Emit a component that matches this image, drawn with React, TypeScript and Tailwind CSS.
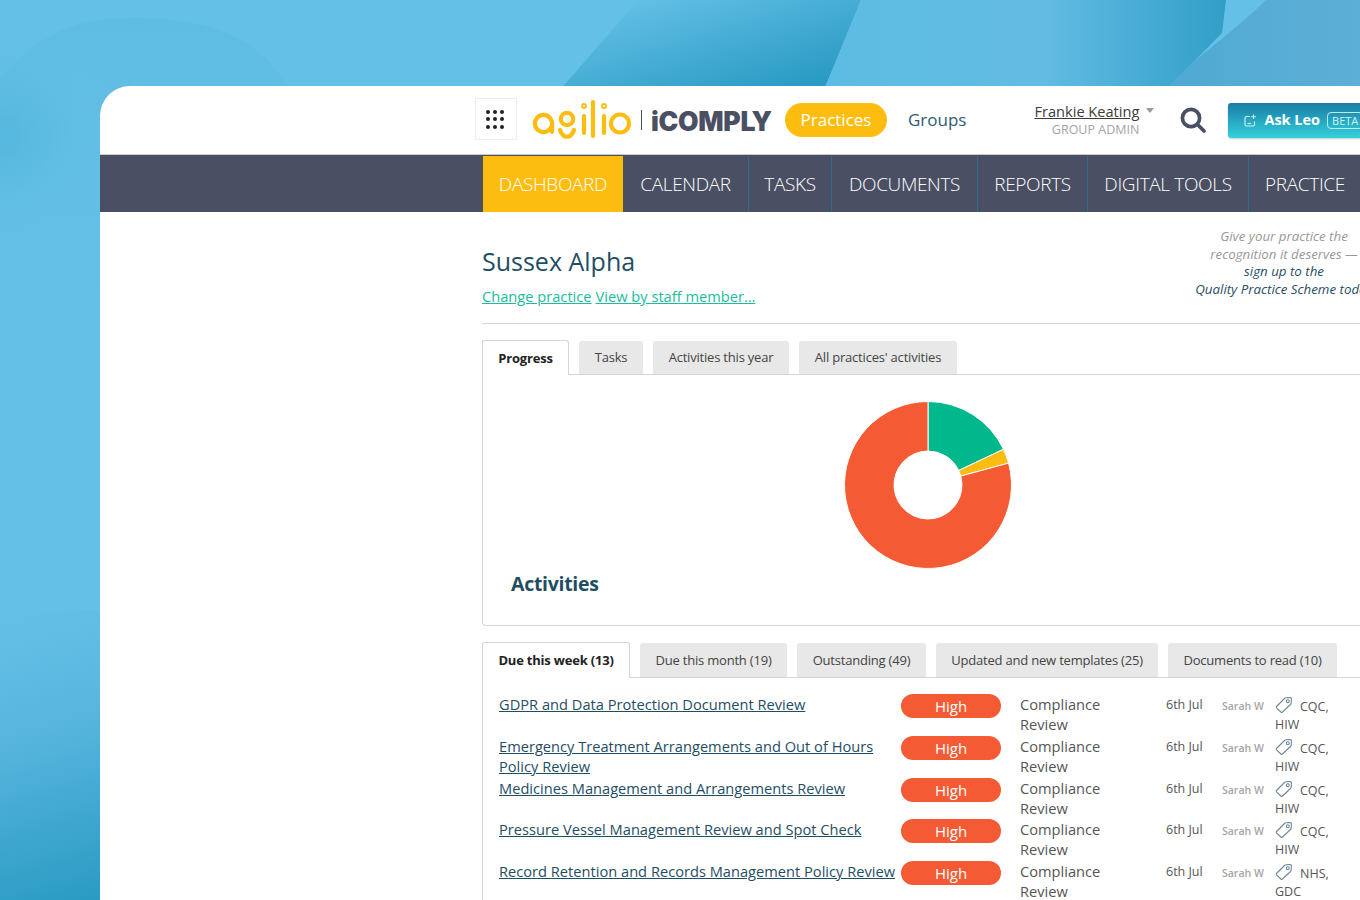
import React from 'react';

const tasks = [
  { title: 'GDPR and Data Protection Document Review', tags: ['CQC,', 'HIW'] },
  { title: 'Emergency Treatment Arrangements and Out of Hours Policy Review', tags: ['CQC,', 'HIW'] },
  { title: 'Medicines Management and Arrangements Review', tags: ['CQC,', 'HIW'] },
  { title: 'Pressure Vessel Management Review and Spot Check', tags: ['CQC,', 'HIW'] },
  { title: 'Record Retention and Records Management Policy Review', tags: ['NHS,', 'GDC'] },
];

const navItems = [
  { label: 'CALENDAR', w: 'w-[125px]' },
  { label: 'TASKS', w: 'w-[83px]' },
  { label: 'DOCUMENTS', w: 'w-[146px]' },
  { label: 'REPORTS', w: 'w-[110px]' },
  { label: 'DIGITAL TOOLS', w: 'w-[161px]' },
  { label: 'PRACTICE', w: 'w-[113px]' },
];

const polar = (r: number, deg: number) => {
  const a = ((deg - 90) * Math.PI) / 180;
  return `${84 + r * Math.cos(a)} ${84 + r * Math.sin(a)}`;
};

const slice = (from: number, to: number) => {
  const large = to - from > 180 ? 1 : 0;
  return `M${polar(83.5, from)} A83.5 83.5 0 ${large} 1 ${polar(83.5, to)} L${polar(34, to)} A34 34 0 ${large} 0 ${polar(34, from)} Z`;
};

const Background = () => (
  <svg className="absolute inset-0" width="1360" height="900" viewBox="0 0 1360 900">
    <defs>
      <linearGradient id="band1" x1="0.25" y1="0" x2="1" y2="0.75">
        <stop offset="0" stopColor="#63bfe6" />
        <stop offset="1" stopColor="#2a9bc3" />
      </linearGradient>
      <linearGradient id="band2" x1="0" y1="0" x2="1" y2="0">
        <stop offset="0" stopColor="#5dbce3" />
        <stop offset="0.55" stopColor="#62bbe3" />
        <stop offset="1" stopColor="#319fc8" />
      </linearGradient>
      <linearGradient id="band3" x1="0" y1="0" x2="1" y2="0">
        <stop offset="0" stopColor="#4fa9d2" />
        <stop offset="1" stopColor="#5dafd7" />
      </linearGradient>
      <linearGradient id="hill" x1="0" y1="0" x2="0" y2="1">
        <stop offset="0" stopColor="#5fbce3" />
        <stop offset="1" stopColor="#65c0e7" />
      </linearGradient>
      <radialGradient id="spot" gradientUnits="userSpaceOnUse" cx="0" cy="135" r="120">
        <stop offset="0" stopColor="#54b7dd" />
        <stop offset="1" stopColor="#65c0e7" stopOpacity="0" />
      </radialGradient>
      <linearGradient id="corner" gradientUnits="userSpaceOnUse" x1="10" y1="610" x2="95" y2="900">
        <stop offset="0" stopColor="#65c0e7" />
        <stop offset="0.4" stopColor="#58b6de" />
        <stop offset="1" stopColor="#2a9bc3" />
      </linearGradient>
    </defs>
    <rect width="1360" height="900" fill="#65c0e7" />
    <path d="M0 78 C40 30 85 18 130 18 C200 18 255 30 290 90 L290 300 L0 300 Z" fill="url(#hill)" />
    <rect width="200" height="300" fill="url(#spot)" />
    <rect y="610" width="100" height="290" fill="url(#corner)" />
    <path d="M638 0 L861 0 L824 90 L560 90 Z" fill="url(#band1)" />
    <path d="M861 0 L1226 0 L1222 33 L1166 90 L824 90 Z" fill="url(#band2)" />
    <path d="M1266 0 L1360 0 L1360 90 L1166 90 C1190 60 1225 40 1266 0 Z" fill="url(#band3)" />
  </svg>
);

const AgilioLogo = () => (
  <svg width="102" height="42" viewBox="0 0 102 42" fill="none" stroke="#fdbd10" strokeWidth="4.2" strokeLinecap="round" role="img" aria-label="agilio">
    <circle cx="11.5" cy="24.5" r="8.6" />
    <line x1="20.1" y1="24.5" x2="20.1" y2="33" />
    <circle cx="35" cy="20" r="6.2" />
    <path d="M28 31 C31 40 39 40 42 31" />
    <line x1="52" y1="17" x2="52" y2="34" />
    <circle cx="52" cy="7" r="0.9" strokeWidth="4" />
    <line x1="61" y1="3" x2="61" y2="37" />
    <line x1="72" y1="17" x2="72" y2="34" />
    <circle cx="72" cy="7" r="0.9" strokeWidth="4" />
    <circle cx="88" cy="24.5" r="9" />
  </svg>
);

const TabBar = ({ tabs, active, className }: { tabs: { label: string; w: string }[]; active: string; className: string }) => (
  <div className={`flex gap-[10px] border-b border-[#d5d5d5] ${className}`}>
    {tabs.map(t => (
      <div
        key={t.label}
        className={
          t.label === active
            ? `${t.w} -mb-px flex items-center justify-center rounded-t-[3px] border border-b-0 border-[#d5d5d5] bg-white pt-px text-[13px] font-bold tracking-[-0.2px] text-[#222]`
            : `${t.w} mt-px flex items-center justify-center rounded-t-[3px] bg-[#e8e8e8] pt-px text-[13px] tracking-[-0.2px] text-[#444]`
        }
      >
        {t.label}
      </div>
    ))}
  </div>
);

const TagIcon = () => (
  <svg width="18" height="18" viewBox="0 0 18 18" fill="none" stroke="#6f8796" strokeWidth="1.1" className="mb-[2px] shrink-0">
    <path d="M1.5 10.5 L9.5 2.5 Q10.2 1.8 11 1.8 L15.2 1.6 Q16.4 1.6 16.4 2.8 L16.2 7 Q16.2 7.8 15.5 8.5 L7.5 16 Q6.7 16.7 5.9 16 L1.5 11.8 Q0.9 11.1 1.5 10.5 Z" />
    <circle cx="12.8" cy="5.2" r="1.4" />
  </svg>
);

export default function App() {
  return (
    <div className="relative h-screen overflow-hidden font-['Open_Sans',sans-serif]">
      <Background />
      <div className="relative ml-[100px] mt-[86px] h-[814px] w-[1400px] rounded-tl-[30px] bg-white">
        {/* top bar */}
        <div className="flex h-[68px] items-center pl-[375px]">
          <div className="mt-[-2px] grid h-[42px] w-[42px] grid-cols-3 content-center justify-items-center gap-y-[3.5px] border border-[#eeeeee] pl-[8px] pr-[10px]">
            {Array.from({ length: 9 }).map((_, i) => (
              <span key={i} className="h-[4px] w-[4px] rounded-full bg-[#222]" />
            ))}
          </div>
          <div className="ml-[15px] mt-[-1px]">
            <AgilioLogo />
          </div>
          <div className="ml-[7px] h-[20px] w-px bg-[#4a4f63]" />
          <span className="ml-[9px] mt-[3px] w-[121px] whitespace-nowrap font-['Inter',sans-serif] text-[26.5px] font-black leading-none tracking-[-0.3px] text-[#4a4f63]">iCOMPLY</span>
          <div className="ml-[13px] flex h-[34px] w-[102px] items-center justify-center rounded-full bg-[#fdbd10] text-[17px] text-white">Practices</div>
          <span className="ml-[21px] text-[17px] text-[#2f5a73]">Groups</span>
          <div className="ml-[68px] flex flex-col items-end">
            <span className="text-[14.6px] leading-[19px] text-[#3c3c3c] underline">Frankie Keating</span>
            <span className="text-[12.5px] leading-[17px] text-[#a3a3a3]">GROUP ADMIN</span>
          </div>
          <div className="mb-[20px] ml-[7px] h-0 w-0 border-x-[4.5px] border-t-[5px] border-x-transparent border-t-[#9a9a9a]" />
          <svg className="ml-[26px]" width="26" height="26" viewBox="0 0 26 26" fill="none" stroke="#4a4f63" strokeWidth="3.7" strokeLinecap="round">
            <circle cx="11" cy="11" r="8.6" />
            <line x1="17.5" y1="17.5" x2="24" y2="24" />
          </svg>
          <div className="ml-[22px] flex h-[35px] w-[150px] items-center rounded-[3px] bg-gradient-to-b from-[#1b7ca8] to-[#33d2d8] pl-[16px] text-white shadow-[0_1px_2px_rgba(0,0,0,0.2)]">
            <svg width="13" height="13" viewBox="0 0 13 13" fill="none" stroke="#d8f3f5" strokeWidth="1.1">
              <path d="M6 2.5 H2.5 Q1 2.5 1 4 V10.5 Q1 12 2.5 12 H9 Q10.5 12 10.5 10.5 V7.5" />
              <path d="M9.5 0.5 V5 M7.2 2.7 H11.8" />
              <path d="M3.5 9.5 H7" />
            </svg>
            <span className="ml-[7px] text-[14.5px] font-bold">Ask Leo</span>
            <span className="ml-[7px] rounded-[4px] border border-[#bfeaf0] px-[4px] text-[11px] leading-[15px] text-[#d8f3f5]">BETA</span>
          </div>
        </div>

        {/* nav */}
        <div className="flex h-[58px] border-t border-[#c9c9c9] bg-[#4a4f63] pl-[383px] pt-px font-light text-white">
          <div className="flex w-[140px] items-center justify-center bg-[#fdbd10] text-[19px] tracking-[-0.35px]">DASHBOARD</div>
          {navItems.map((n, i) => (
            <div key={n.label} className={`${n.w} flex items-center justify-center text-[19px] tracking-[-0.35px] ${i > 0 ? 'border-l border-[#2e6f88]' : ''}`}>
              {n.label}
            </div>
          ))}
        </div>

        {/* content */}
        <div className="ml-[382px] w-[905px]">
          <div className="flex h-[112px] justify-between border-b border-[#d5d5d5]">
            <div className="pt-[32px]">
              <h1 className="text-[25px] leading-[34px] text-[#1f4e64]">Sussex Alpha</h1>
              <div className="mt-[8px] flex gap-[4px] text-[14.65px] leading-[20px] text-[#1cbc9c] underline">
                <span>Change practice</span>
                <span>View by staff member…</span>
              </div>
            </div>
            <div className="w-[206px] whitespace-nowrap pt-[16px] text-center text-[13.3px] italic leading-[17.5px]">
              <p className="text-[#999]">Give your practice the</p>
              <p className="text-[#999]">recognition it deserves —</p>
              <p className="text-[#1f4e64]">sign up to the</p>
              <p className="text-[#1f4e64]">Quality Practice Scheme today</p>
            </div>
          </div>

          <div className="mt-[16px] h-[286px] rounded-bl-[4px] border-b border-l border-[#d5d5d5]">
            <TabBar
              className="-ml-px h-[35px]"
              active="Progress"
              tabs={[
                { label: 'Progress', w: 'w-[87px]' },
                { label: 'Tasks', w: 'w-[64px]' },
                { label: 'Activities this year', w: 'w-[136px]' },
                { label: "All practices' activities", w: 'w-[158px]' },
              ]}
            />
            <div className="flex h-[250px] flex-col">
              <svg className="ml-[361px] mt-[25.5px] shrink-0" width="168" height="168" viewBox="0 0 168 168" stroke="#fff" strokeWidth="1">
                <path d={slice(0, 64.7)} fill="#00b88c" />
                <path d={slice(64.7, 74.8)} fill="#fdbd10" />
                <path d={slice(74.8, 360)} fill="#f45b34" />
              </svg>
              <h2 className="ml-[28px] mt-[1.5px] text-[19.5px] font-bold leading-[28px] tracking-[-0.3px] text-[#1f4e64]">Activities</h2>
            </div>
          </div>

          <TabBar
            className="mt-[16px] h-[36px]"
            active="Due this week (13)"
            tabs={[
              { label: 'Due this week (13)', w: 'w-[148px]' },
              { label: 'Due this month (19)', w: 'w-[147px]' },
              { label: 'Outstanding (49)', w: 'w-[129px]' },
              { label: 'Updated and new templates (25)', w: 'w-[222px]' },
              { label: 'Documents to read (10)', w: 'w-[169px]' },
            ]}
          />
          <div className="border-l border-[#d5d5d5] pl-[16px] pt-[17px]">
            {tasks.map(t => (
              <div key={t.title} className="flex h-[41.75px] text-[14.65px] leading-[20px]">
                <span className="mt-[-1px] w-[402px] pr-[4px] text-[#1f4e64] underline">{t.title}</span>
                <div className="mt-[-1px] flex h-[24px] w-[100px] items-center justify-center rounded-full bg-[#f45b34] text-[15px] text-white">High</div>
                <span className="ml-[19px] mr-[46px] mt-[-1px] w-[100px] text-[#555]">Compliance Review</span>
                <span className="w-[56px] text-[12.5px] text-[#555]">6th Jul</span>
                <span className="w-[53px] pt-px text-[10.5px] font-semibold text-[#a5a5a5]">Sarah W</span>
                <div className="w-[60px] pt-px text-[12.5px] leading-[18px] text-[#555]">
                  <div className="flex items-center gap-[7px]">
                    <TagIcon />
                    <span className="mt-[2px]">{t.tags[0]}</span>
                  </div>
                  <div>{t.tags[1]}</div>
                </div>
              </div>
            ))}
          </div>
        </div>
      </div>
    </div>
  );
}
